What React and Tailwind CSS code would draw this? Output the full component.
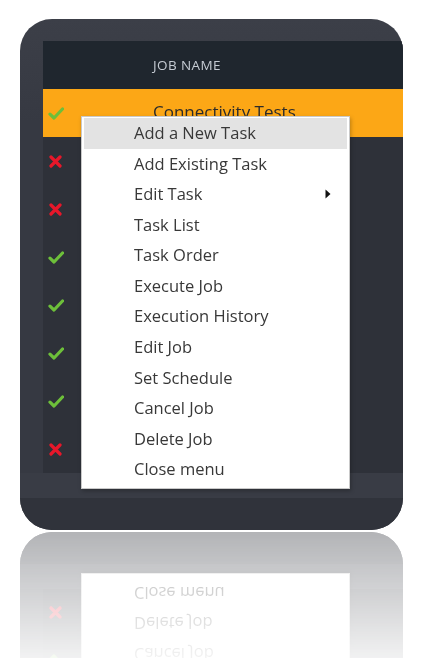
import React from "react";

const Check = () => (
  <svg width="16" height="13" viewBox="0 0 16 13">
    <path d="M2 7.2 L6 11 L14.5 2" fill="none" stroke="#6dbf3a" strokeWidth="3.2" strokeLinecap="round" strokeLinejoin="round" />
  </svg>
);

const Cross = () => (
  <svg width="13" height="13" viewBox="0 0 13 13">
    <path d="M2 2 L11 11 M11 2 L2 11" fill="none" stroke="#e8172a" strokeWidth="3.2" strokeLinecap="round" />
  </svg>
);

const rows = [true, false, false, true, true, true, true, false];

const items = [
  "Add a New Task",
  "Add Existing Task",
  "Edit Task",
  "Task List",
  "Task Order",
  "Execute Job",
  "Execution History",
  "Edit Job",
  "Set Schedule",
  "Cancel Job",
  "Delete Job",
  "Close menu",
];

export default function App() {
  return (
    <div
      className="w-[437px] h-[658px] bg-white overflow-hidden pt-[19px] pl-[20px]"
      style={{ fontFamily: '"Open Sans", "Noto Sans", sans-serif' }}
    >
      <div className="relative w-[383px] [-webkit-box-reflect:below_2px_linear-gradient(transparent_70%,rgba(255,255,255,0.37))]">
        <div className="w-[383px] h-[511px] rounded-[32px] overflow-hidden flex flex-col bg-[linear-gradient(#3c3f48,#363942_20%,#363942)]">
          <div className="h-[22px] shrink-0" />
          <div className="flex shrink-0">
            <div className="w-[23px] shrink-0" />
            <div className="flex-1 flex flex-col bg-[#2e3139]">
              <div className="h-[48px] bg-[#1f262e] flex items-center pl-[110px]">
                <span className="text-[13.5px] tracking-[0.4px] text-[#c5cbd3] uppercase">Job Name</span>
              </div>
              {rows.map((ok, i) => (
                <div
                  key={i}
                  className={`h-[48px] flex items-center ${i === 0 ? "bg-[#fca716]" : ""}`}
                >
                  <div className="w-[25px] flex justify-center">{ok ? <Check /> : <Cross />}</div>
                  {i === 0 && (
                    <span className="ml-[85px] text-[17px] text-[#2b2b2b] -mt-[2px]">Connectivity Tests</span>
                  )}
                </div>
              ))}
            </div>
          </div>
          <div className="h-[25px] shrink-0 bg-[#393c45]" />
          <div className="flex-1 bg-[#30333b]" />
        </div>

        <div className="absolute left-[61px] top-[97px] w-[269px] bg-white border border-[#c9c9c9] shadow-[1px_2px_4px_rgba(0,0,0,0.25)] px-[2px] pt-[1px] pb-[3px]">
          {items.map((t, i) => (
            <div
              key={t}
              className={`h-[30.6px] flex items-center pl-[50px] pr-[16px] justify-between text-[16.5px] text-[#383838] ${i === 0 ? "bg-[#e3e3e3]" : ""}`}
            >
              <span>{t}</span>
              {t === "Edit Task" && (
                <svg width="6" height="10" viewBox="0 0 6 10">
                  <path d="M0.5 0.5 L5.5 5 L0.5 9.5 Z" fill="#111" />
                </svg>
              )}
            </div>
          ))}
        </div>
      </div>
    </div>
  );
}
